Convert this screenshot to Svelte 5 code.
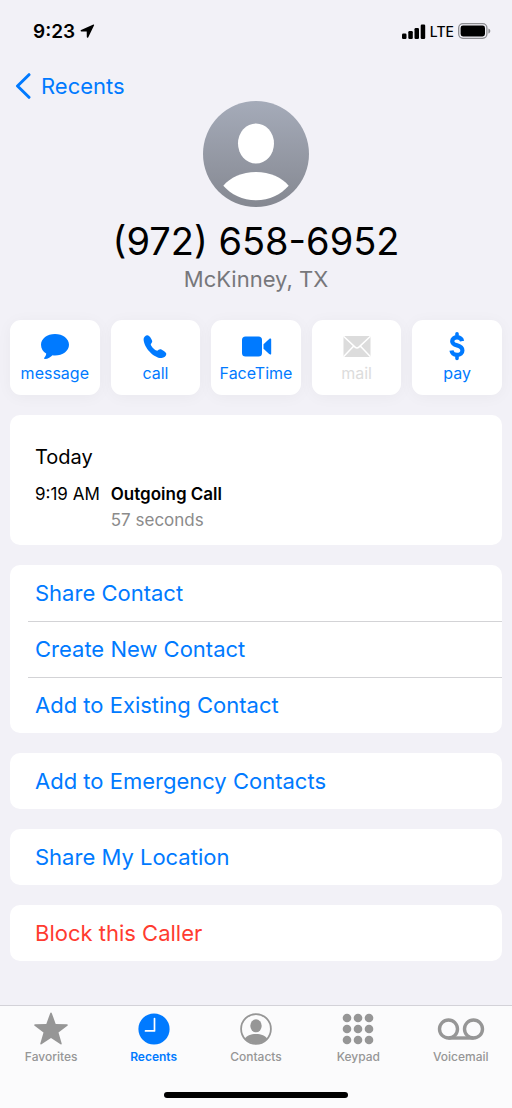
<script>
  const actions = [
    { id: 'message', label: 'message' },
    { id: 'call', label: 'call' },
    { id: 'video', label: 'FaceTime' },
    { id: 'mail', label: 'mail', disabled: true },
    { id: 'pay', label: 'pay' }
  ];
  const groups = [
    ['Share Contact', 'Create New Contact', 'Add to Existing Contact'],
    ['Add to Emergency Contacts'],
    ['Share My Location'],
    ['Block this Caller']
  ];
  const tabs = ['Favorites', 'Recents', 'Contacts', 'Keypad', 'Voicemail'];
  const dots = [0, 1, 2, 3, 4, 5, 6, 7, 8];
  let active = $state('Recents');
</script>

<div class="screen">
  <div class="status">
    <div class="clock">
      <span>9:23</span>
      <svg width="15" height="14" viewBox="0 0 14 14" aria-hidden="true">
        <path d="M12.900.5.6 6c-.8.400-.6 1.500.3 1.500l5.300.1.1 5.400c0 .9 1.100 1.100 1.500.3L13.600 1.200c.2-.5-.2-.9-.7-.7z" fill="#000" />
      </svg>
    </div>
    <div class="signal">
      <svg width="24" height="15" viewBox="0 0 24 15" aria-hidden="true">
        <rect x="0" y="9.500" width="4.500" height="5.500" rx="1.200" />
        <rect x="6.300" y="7" width="4.500" height="8" rx="1.200" />
        <rect x="12.500" y="4" width="4.500" height="11" rx="1.200" />
        <rect x="18.700" y="0.500" width="4.500" height="14.500" rx="1.200" />
      </svg>
      <span>LTE</span>
      <svg width="33" height="16" viewBox="0 0 33 16" aria-hidden="true">
        <rect x=".7" y=".7" width="28.2" height="14.6" rx="4.2" fill="none" stroke="#8c8c90" stroke-width="1.3" />
        <rect x="2.6" y="2.6" width="24.4" height="10.8" rx="2.4" />
        <path d="M30.4 5.4c1.2.4 1.900 1.400 1.900 2.600s-.7 2.200-1.900 2.600z" fill="#8c8c90" />
      </svg>
    </div>
  </div>

  <header>
    <nav>
      <a class="back" href="#recents">
        <svg width="16" height="26" viewBox="0 0 16 26" aria-hidden="true">
          <path d="M14 1.700 2.500 13 14 24.300" fill="none" stroke="#007aff" stroke-width="3" stroke-linecap="round" stroke-linejoin="round" />
        </svg>
        Recents
      </a>
    </nav>
    <svg class="avatar" width="106" height="106" viewBox="0 0 106 106" role="img" aria-label="Contact photo">
      <defs>
        <linearGradient id="shade" x1="0" y1="0" x2="0" y2="1">
          <stop offset="0" stop-color="#a5abb9" />
          <stop offset="1" stop-color="#858891" />
        </linearGradient>
      </defs>
      <circle cx="53" cy="53" r="53" fill="url(#shade)" />
      <ellipse cx="53" cy="42.500" rx="18" ry="20" fill="#fff" />
      <path d="M20.300 84.800C27 76.500 39 71 53 71s26 5.500 32.700 13.800C78 93.500 66.500 99.300 53 99.300S28 93.500 20.300 84.800z" fill="#fff" />
    </svg>
    <h1>(972) 658-6952</h1>
    <p class="place">McKinney, TX</p>
  </header>

  <main>
    <div class="actions">
      {#each actions as a}
        <button class="action" disabled={a.disabled}>
          <svg width="32" height="30" viewBox="0 0 32 30" fill="currentColor" aria-hidden="true">
            {#if a.id === 'message'}
              <path d="M16 3c7.800 0 14 4.600 14 10.700S23.800 24.400 16 24.400c-.9 0-1.700 0-2.500-.2-1.700 1.900-4.500 3.600-7.600 3.800-.9 0-1.100-.7-.6-1.200 1.100-1.200 1.900-2.600 1.900-4.200C4.100 20.700 2 17.500 2 13.700 2 7.600 8.200 3 16 3z" />
            {:else if a.id === 'call'}
              <path d="M4.600 8c0-1.600 2.100-3.700 3.700-3.700 1.400 0 2.500 1.300 3.700 3.100 1.400 2.100 1.600 3.200.7 4.400-.7 1-1.100 1.400-.8 2.200.7 1.900 3.700 4.900 5.600 5.600.8.300 1.200-.1 2.100-.8 1.200-.9 2.300-.8 4.500.6s3.300 2.400 3.200 3.700c-.1 1.900-2.100 3.800-4.700 4C15.500 27.500 4.600 17 4.600 8z" />
            {:else if a.id === 'video'}
              <rect x="2" y="5.500" width="20" height="20" rx="3.500" />
              <path d="M23.500 13.200 29.200 7.900c1-.9 2-.5 2 .7v13.800c0 1.200-1 1.600-2 .7l-5.700-5.300z" />
            {:else if a.id === 'mail'}
              <rect x="2.500" y="5" width="27" height="21" rx="1" />
              <path d="m2.500 5.300 11.600 10.800c1.200 1.100 2.600 1.100 3.800 0L29.500 5.300M2.500 25.800l10-10.500m17 10.500-10-10.500" fill="none" stroke="#fff" stroke-width="1.500" />
            {:else}
              <g fill="none" stroke="currentColor" stroke-width="4.200">
                <path d="M21.100 10.200C20.600 7.600 18.800 6.400 16 6.400c-2.900 0-4.800 1.500-4.800 3.800 0 2.300 1.500 3.300 4.900 4.200 3.700 1 5.300 2.300 5.300 5 0 2.700-2.100 4.400-5.400 4.400-3.100 0-5.100-1.500-5.500-4.300" />
                <path d="M16 2.800V6m0 18v3.400" stroke-linecap="round" stroke-width="3.600" />
              </g>
            {/if}
          </svg>
          <span>{a.label}</span>
        </button>
      {/each}
    </div>

    <section class="card log">
      <h2>Today</h2>
      <div class="entry">
        <time>9:19 AM</time>
        <div>
          <strong>Outgoing Call</strong>
          <span class="length">57 seconds</span>
        </div>
      </div>
    </section>

    {#each groups as group}
      <div class="card">
        {#each group as item}
          <button class="row" class:danger={item === 'Block this Caller'}>{item}</button>
        {/each}
      </div>
    {/each}
  </main>

  <footer>
    <nav class="tabs">
      {#each tabs as tab}
        <button class="tab" class:active={active === tab} onclick={() => (active = tab)}>
          <svg width="48" height="36" viewBox="0 0 48 36" fill="currentColor" aria-hidden="true">
            {#if tab === 'Favorites'}
              <path d="M24 1.600c.4 0 .7.200.9.800L28.700 12.900l11.200.3c1 0 1.200.9.500 1.500l-8.900 6.900 3.200 10.800c.2.900-.4 1.300-1.200.8L24 27l-9.500 6.200c-.8.500-1.400.1-1.200-.8l3.200-10.800-8.900-6.900c-.7-.6-.5-1.500.5-1.500l11.200-.3 3.800-10.500c.2-.6.500-.8.900-.8z" />
            {:else if tab === 'Recents'}
              <circle cx="24" cy="18" r="15.600" />
              <path d="M24.500 7.500v12.400h-9" fill="none" stroke="#fff" stroke-width="1.700" stroke-linecap="round" stroke-linejoin="round" />
            {:else if tab === 'Contacts'}
              <circle cx="24" cy="18" r="14.900" fill="none" stroke="currentColor" stroke-width="1.800" />
              <ellipse cx="24" cy="14.800" rx="5.700" ry="6.500" />
              <path d="M12.800 27.800c1.600-3 5.900-4.900 11.200-4.900s9.600 1.900 11.200 4.900C32.200 30.900 28.400 32.600 24 32.600s-8.200-1.700-11.200-4.800z" />
            {:else if tab === 'Keypad'}
              {#each dots as d}
                <circle cx={13 + (d % 3) * 11} cy={7 + Math.floor(d / 3) * 11} r="4.300" />
              {/each}
            {:else}
              <g fill="none" stroke="currentColor" stroke-width="3.400">
                <circle cx="11.500" cy="18" r="9" />
                <circle cx="36.500" cy="18" r="9" />
                <path d="M11.500 27h25" />
              </g>
            {/if}
          </svg>
          <span>{tab}</span>
        </button>
      {/each}
    </nav>
    <div class="home"></div>
  </footer>
</div>

<style>
  :global(body) {
    margin: 0;
    background: #f2f1f7;
  }
  .screen {
    min-height: 100vh;
    display: flex;
    flex-direction: column;
    font-family: Inter, "Liberation Sans", sans-serif;
    color: #000;
  }
  button {
    border: 0;
    margin: 0;
    padding: 0;
    background: none;
    font: inherit;
    cursor: pointer;
  }
  svg {
    flex: none;
  }
  .status {
    display: flex;
    justify-content: space-between;
    align-items: center;
    height: 62px;
    padding: 0 21px 0 33px;
  }
  .clock {
    display: flex;
    align-items: center;
    gap: 5px;
    font-size: 19px;
    font-weight: 600;
  }
  .signal {
    display: flex;
    align-items: center;
    gap: 4px;
    font-size: 14px;
    font-weight: 500;
  }
  header {
    display: flex;
    flex-direction: column;
    align-items: center;
  }
  header nav {
    align-self: stretch;
    height: 39px;
    padding-left: 15px;
  }
  .back {
    display: inline-flex;
    align-items: center;
    gap: 10px;
    height: 48px;
    color: #007aff;
    font-size: 22px;
    text-decoration: none;
  }
  .avatar {
    display: block;
  }
  h1 {
    margin: 10px 0 0;
    font-size: 38px;
    line-height: 48px;
    font-weight: 400;
  }
  .place {
    margin: 0;
    font-size: 22px;
    line-height: 28px;
    color: #77777b;
  }
  main {
    display: flex;
    flex-direction: column;
    gap: 20px;
    padding: 27px 10px 43px;
  }
  .actions {
    display: grid;
    grid-template-columns: repeat(5, 1fr);
    gap: 11px;
  }
  .action {
    display: flex;
    flex-direction: column;
    align-items: center;
    gap: 2px;
    padding: 11px 0;
    border-radius: 11px;
    background: #fff;
    box-shadow: 0 2px 16px rgba(0, 0, 0, 0.04);
    color: #007aff;
    font-size: 16px;
    line-height: 21px;
  }
  .action:disabled {
    color: #dcdcdc;
    cursor: default;
  }
  .card {
    border-radius: 10px;
    background: #fff;
    overflow: hidden;
  }
  .log {
    padding: 28px 25px 12px;
  }
  h2 {
    margin: 0 0 10px;
    font-size: 20px;
    line-height: 28px;
    font-weight: 400;
  }
  .entry {
    display: flex;
    gap: 11px;
    font-size: 17px;
    line-height: 26px;
  }
  .entry div {
    display: flex;
    flex-direction: column;
  }
  strong {
    font-weight: 600;
  }
  .length {
    color: #8b8b8b;
  }
  .row {
    display: block;
    width: 100%;
    padding: 0 25px;
    line-height: 56px;
    font-size: 22px;
    text-align: left;
    color: #007aff;
  }
  .row + .row {
    background: linear-gradient(#d3d3d6, #d3d3d6) 18px 0 / 100% 1px no-repeat;
  }
  .danger {
    color: #ff3b30;
  }
  footer {
    margin-top: auto;
    border-top: 1px solid #d3d2d8;
    background: #fbfbfc;
  }
  .tabs {
    display: grid;
    grid-template-columns: repeat(5, 1fr);
    padding-top: 5px;
  }
  .tab {
    display: flex;
    flex-direction: column;
    align-items: center;
    gap: 2px;
    color: #969696;
    font-size: 12px;
    line-height: 16px;
    font-weight: 500;
  }
  .tab.active {
    color: #007aff;
    font-weight: 600;
  }
  .home {
    width: 36%;
    height: 6px;
    margin: 27px auto 10px;
    border-radius: 3px;
    background: #000;
  }
</style>
